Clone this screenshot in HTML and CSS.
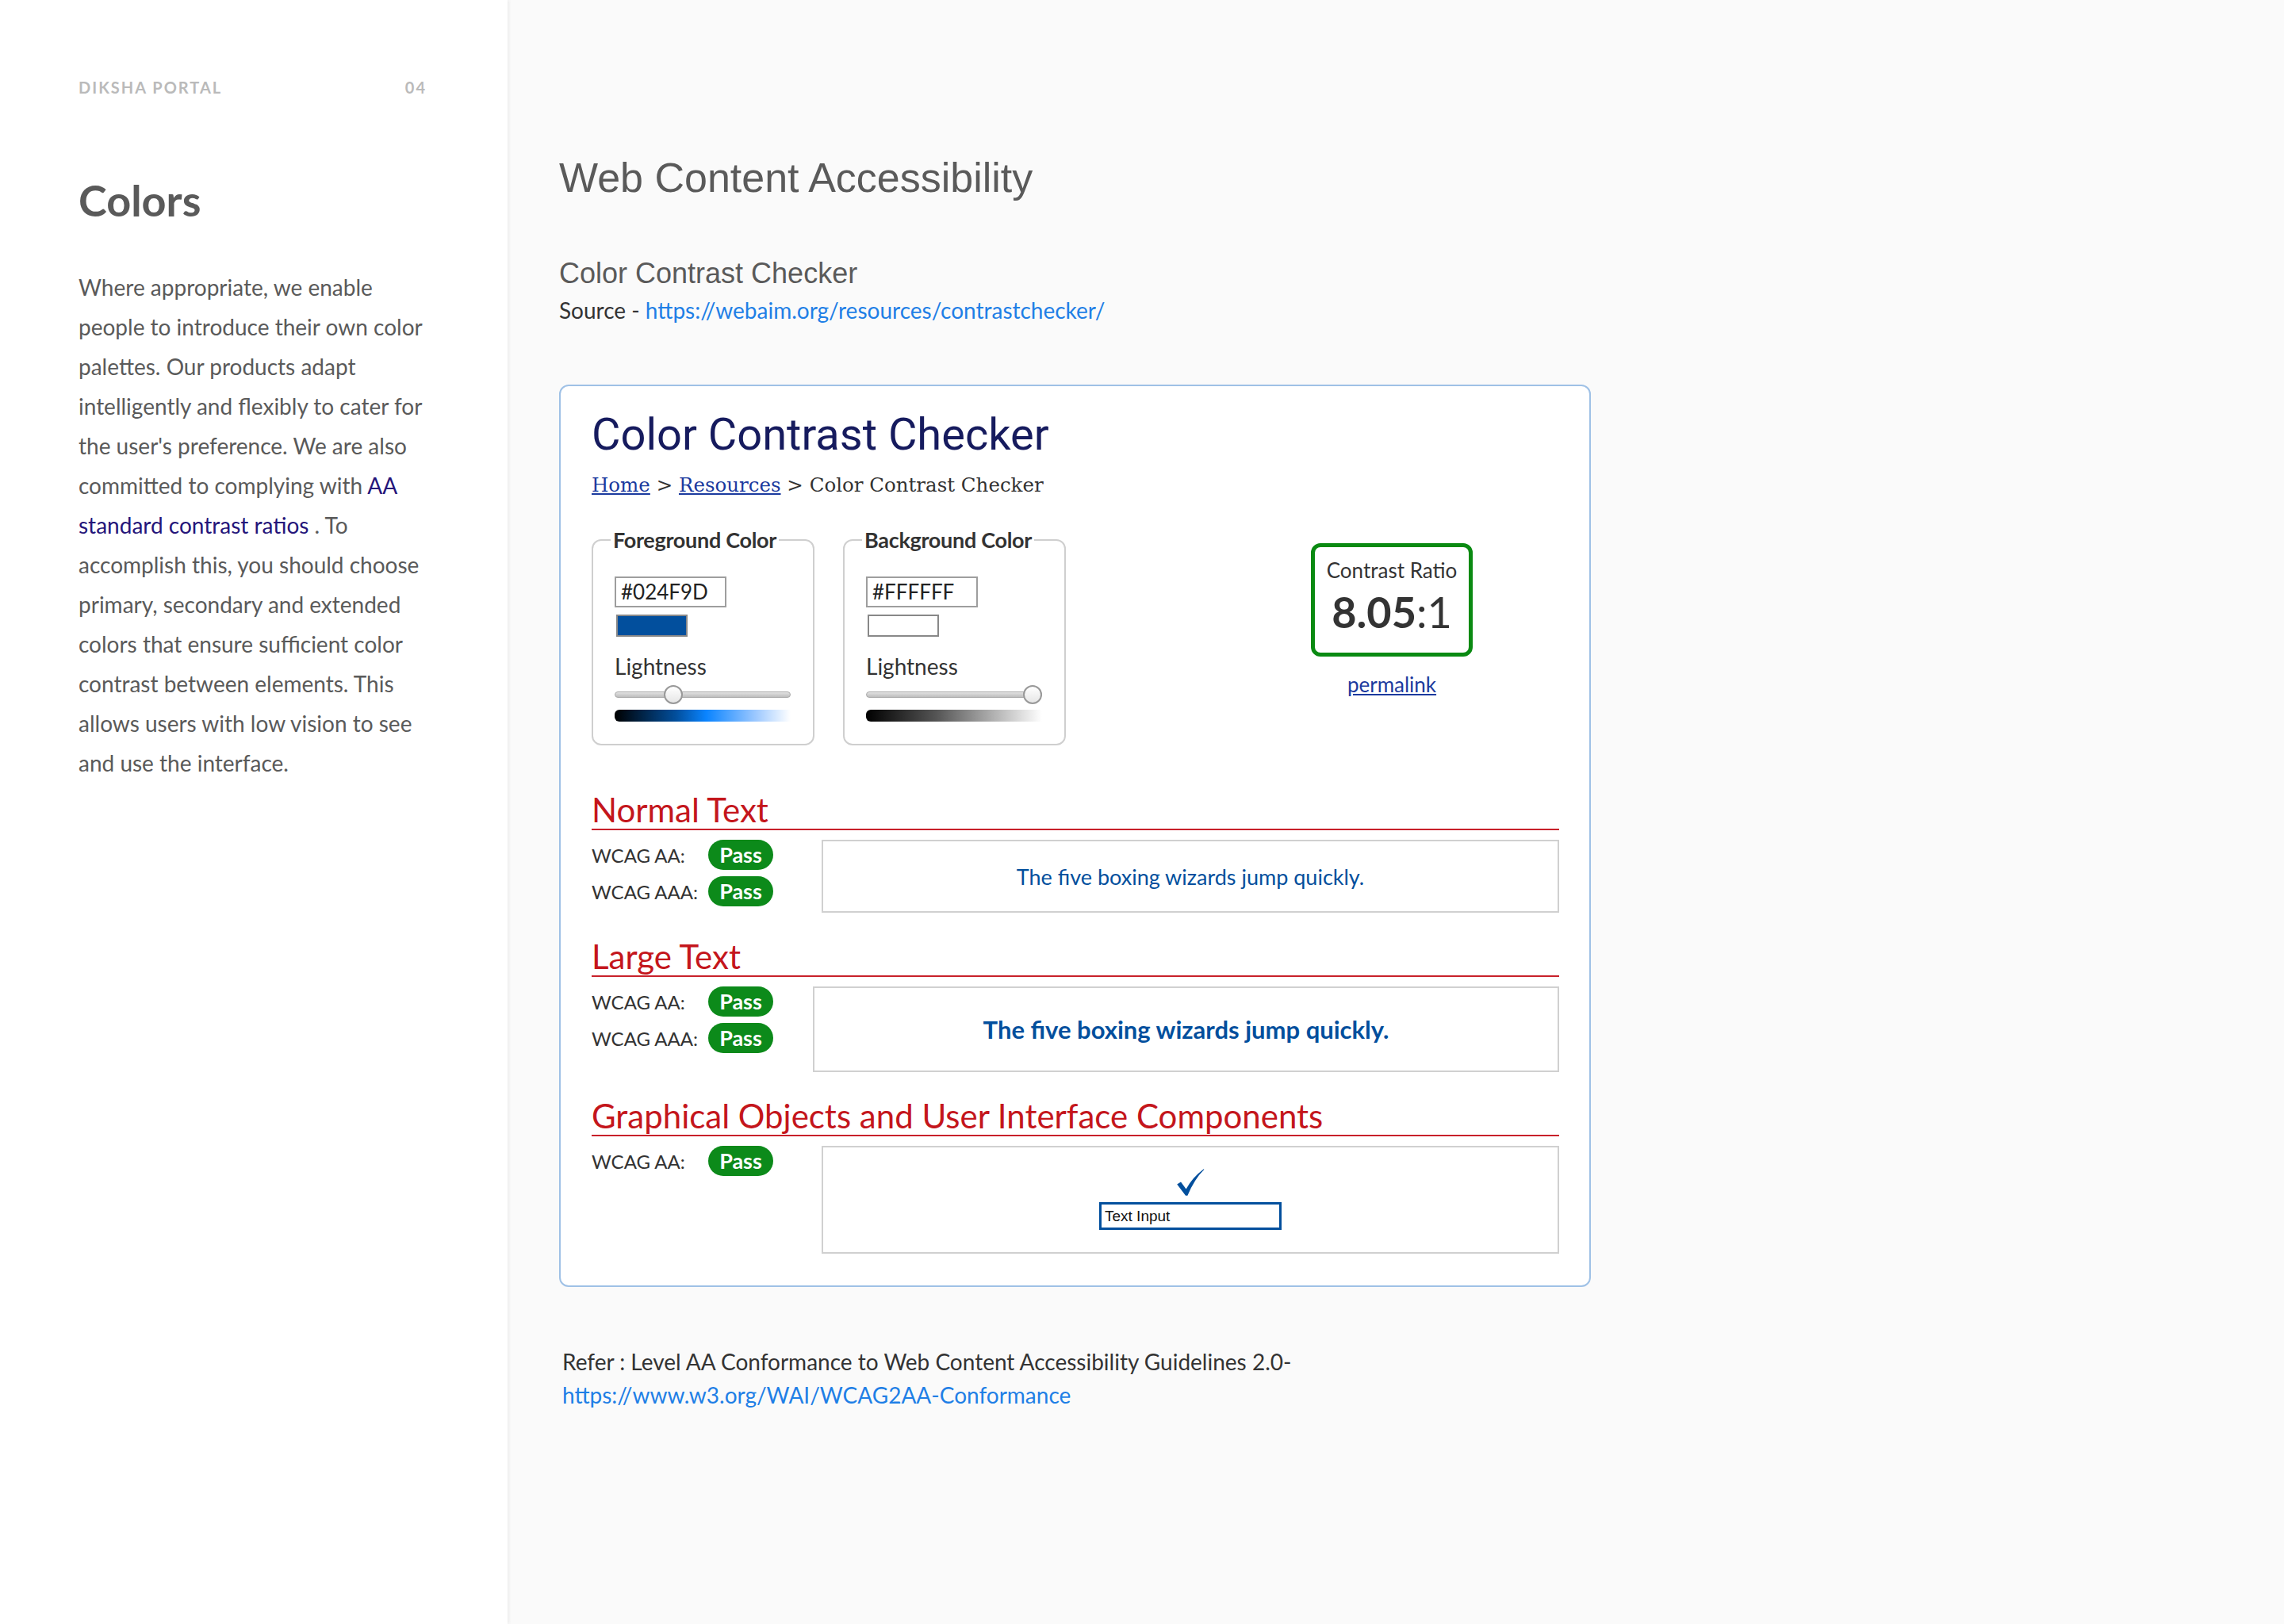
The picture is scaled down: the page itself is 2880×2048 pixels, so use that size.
FILE: index.html
```html
<!DOCTYPE html>
<html lang="en">
<head>
<meta charset="utf-8">
<title>Colors - Web Content Accessibility</title>
<link rel="stylesheet" href="styles.css">
</head>
<body>
<div class="page">
  <aside class="sidebar">
    <div class="side-head">
      <span class="brand">DIKSHA PORTAL</span>
      <span class="pageno">04</span>
    </div>
    <h1 class="side-title">Colors</h1>
    <p class="side-text">Where appropriate, we enable people to introduce their own color palettes. Our products adapt intelligently and flexibly to cater for the user's preference. We are also committed to complying with <a class="side-link" href="#">AA</a> <a class="side-link" href="#">standard contrast ratios</a> . To accomplish this, you should choose primary, secondary and extended colors that ensure sufficient color contrast between elements. This allows users with low vision to see and use the interface.</p>
  </aside>
  <main class="main">
    <h2 class="main-title">Web Content Accessibility</h2>
    <h3 class="sub-title">Color Contrast Checker</h3>
    <p class="source">Source - <a href="#" class="blue-link">https://webaim.org/resources/contrastchecker/</a></p>

    <section class="card">
      <h1 class="cc-title">Color Contrast Checker</h1>
      <p class="crumbs"><a href="#">Home</a> &gt; <a href="#">Resources</a> &gt; Color Contrast Checker</p>

      <div class="pickers">
        <fieldset class="picker">
          <legend>Foreground Color</legend>
          <div class="hex">#024F9D</div>
          <div class="swatch swatch-fg"></div>
          <div class="light-label">Lightness</div>
          <div class="slider"><span class="track"></span><span class="thumb thumb-fg"></span></div>
          <div class="grad grad-fg"></div>
        </fieldset>
        <fieldset class="picker">
          <legend>Background Color</legend>
          <div class="hex">#FFFFFF</div>
          <div class="swatch swatch-bg"></div>
          <div class="light-label">Lightness</div>
          <div class="slider"><span class="track"></span><span class="thumb thumb-bg"></span></div>
          <div class="grad grad-bg"></div>
        </fieldset>
        <div class="ratio-col">
          <div class="ratio-box">
            <div class="ratio-label">Contrast Ratio</div>
            <div class="ratio-value"><b>8.05</b>:1</div>
          </div>
          <a href="#" class="permalink">permalink</a>
        </div>
      </div>

      <h2 class="sec-title sec-first">Normal Text</h2>
      <div class="result">
        <div class="grades">
          <div class="grade"><span class="glabel">WCAG AA:</span><span class="pass">Pass</span></div>
          <div class="grade"><span class="glabel">WCAG AAA:</span><span class="pass">Pass</span></div>
        </div>
        <div class="sample sample-normal">The five boxing wizards jump quickly.</div>
      </div>

      <h2 class="sec-title">Large Text</h2>
      <div class="result">
        <div class="grades grades-large">
          <div class="grade"><span class="glabel">WCAG AA:</span><span class="pass">Pass</span></div>
          <div class="grade"><span class="glabel">WCAG AAA:</span><span class="pass">Pass</span></div>
        </div>
        <div class="sample sample-large">The five boxing wizards jump quickly.</div>
      </div>

      <h2 class="sec-title">Graphical Objects and User Interface Components</h2>
      <div class="result">
        <div class="grades">
          <div class="grade"><span class="glabel">WCAG AA:</span><span class="pass">Pass</span></div>
        </div>
        <div class="sample sample-ui">
          <svg class="check" width="36" height="36" viewBox="0 0 30 30" aria-hidden="true"><path d="M1 17 L5 14.5 L10.5 22 Q17 10 29 1 L29.5 1.5 Q19 12 12 29 L10 29 Z" fill="#024F9D"/></svg>
          <div class="text-input">Text Input</div>
        </div>
      </div>
    </section>

    <p class="refer">Refer : Level AA Conformance to Web Content Accessibility Guidelines 2.0-<br><a href="#" class="blue-link">https://www.w3.org/WAI/WCAG2AA-Conformance</a></p>
  </main>
</div>
</body>
</html>
```

FILE: styles.css
```css
html, body {
  margin: 0;
  padding: 0;
}
body {
  background: #fafafa;
  font-family: "Lato", "Liberation Sans", sans-serif;
  color: #333;
}
.page {
  display: flex;
  min-height: 2048px;
}
.sidebar {
  width: 640px;
  flex: none;
  background: #ffffff;
  box-sizing: border-box;
  padding: 98px 102px 0 99px;
  box-shadow: 2px 0 4px rgba(0, 0, 0, 0.06);
  position: relative;
  z-index: 1;
}
.side-head {
  display: flex;
  justify-content: space-between;
  font-size: 20px;
  line-height: 24px;
  font-weight: 700;
  color: #bababa;
  letter-spacing: 2px;
}
.side-title {
  margin: 100px 0 0;
  font-size: 54px;
  line-height: 62px;
  font-weight: 700;
  color: #5a5a5a;
}
.side-text {
  margin: 53px -10px 0 0;
  font-size: 28px;
  line-height: 50px;
  color: #5a5a5a;
}
.side-link {
  color: #25157a;
  text-decoration: none;
}
.main {
  flex: 1;
  padding: 194px 0 0 65px;
}
.main-title {
  margin: 0;
  font-family: "Liberation Sans", Arial, sans-serif;
  font-weight: 400;
  font-size: 52px;
  line-height: 60px;
  color: #5a5a5a;
}
.sub-title {
  margin: 69px 0 0;
  font-family: "Liberation Sans", Arial, sans-serif;
  font-weight: 400;
  font-size: 36px;
  line-height: 44px;
  color: #5a5a5a;
}
.source {
  margin: 6px 0 0;
  font-size: 28px;
  line-height: 36px;
  color: #333;
}
.blue-link {
  color: #1f7fe6;
  text-decoration: none;
}
.card {
  margin-top: 76px;
  width: 1301px;
  box-sizing: border-box;
  background: #fff;
  border: 2px solid #9fc1e6;
  border-radius: 12px;
  padding: 28px 38px 40px 39px;
}
.cc-title {
  margin: 0;
  font-family: "Roboto", "Liberation Sans", sans-serif;
  font-weight: 400;
  font-size: 56px;
  line-height: 66px;
  color: #161b5e;
}
.crumbs {
  margin: 15px 0 0;
  font-family: "DejaVu Serif", "Liberation Serif", serif;
  font-size: 24.5px;
  line-height: 32px;
  color: #333;
}
.crumbs a {
  color: #1b3a9e;
}
.pickers {
  display: flex;
  align-items: flex-start;
  margin-top: 38px;
}
.picker {
  margin: 0 36px 0 0;
  width: 281px;
  box-sizing: border-box;
  border: 2px solid #cfcfcf;
  border-radius: 12px;
  padding: 31px 28px 28px 27px;
  min-inline-size: 0;
}
.picker legend {
  padding: 0 3px;
  margin-left: -5px;
  font-weight: 700;
  font-size: 27px;
  line-height: 30px;
  color: #333;
  letter-spacing: -0.3px;
}
.hex {
  width: 141px;
  height: 39px;
  box-sizing: border-box;
  border: 2px solid #9e9e9e;
  font-size: 26px;
  line-height: 35px;
  padding-left: 6px;
  color: #222;
}
.swatch {
  margin: 9px 0 0 2px;
  width: 90px;
  height: 28px;
  box-sizing: border-box;
  border: 2px solid #888;
}
.swatch-fg {
  background: #024F9D;
}
.swatch-bg {
  background: #fff;
}
.light-label {
  margin-top: 21px;
  font-size: 28px;
  line-height: 32px;
  color: #333;
}
.slider {
  position: relative;
  margin-top: 8px;
  height: 24px;
}
.track {
  position: absolute;
  left: 0;
  right: 0;
  top: 8px;
  height: 8px;
  border-radius: 4px;
  background: linear-gradient(#e2e2e2, #bdbdbd);
  border: 1px solid #aaa;
  box-sizing: border-box;
}
.thumb {
  position: absolute;
  top: 0;
  width: 24px;
  height: 24px;
  box-sizing: border-box;
  border-radius: 50%;
  border: 2px solid #999;
  background: linear-gradient(#ffffff, #e6e6e6);
}
.thumb-fg {
  left: 62px;
}
.thumb-bg {
  left: 198px;
}
.grad {
  margin-top: 7px;
  height: 15px;
  border-radius: 6px 0 0 6px;
}
.grad-fg {
  background: linear-gradient(to right, #000 0%, #024F9D 35%, #0a84ff 52%, #9cc8ff 80%, #fff 100%);
}
.grad-bg {
  background: linear-gradient(to right, #000 0%, #555 40%, #aaa 70%, #fff 100%);
}
.ratio-col {
  margin: 19px 0 0 273px;
  display: flex;
  flex-direction: column;
  align-items: center;
}
.ratio-box {
  width: 204px;
  height: 143px;
  box-sizing: border-box;
  border: 5px solid #0a8a12;
  border-radius: 12px;
  text-align: center;
  padding-top: 14px;
}
.ratio-label {
  font-size: 26px;
  line-height: 30px;
  color: #333;
}
.ratio-value {
  margin-top: 6px;
  font-size: 54px;
  line-height: 64px;
  color: #333;
}
.ratio-value b {
  font-weight: 700;
}
.permalink {
  margin-top: 20px;
  font-size: 26px;
  line-height: 30px;
  color: #1b3a9e;
}
.sec-title {
  margin: 31px 0 0;
  font-weight: 400;
  font-size: 42px;
  line-height: 48px;
  color: #c4161c;
  border-bottom: 2px solid #c8202a;
}
.sec-first {
  margin-top: 57px;
}
.result {
  display: flex;
  align-items: flex-start;
  margin-top: 12px;
}
.grades {
  width: 290px;
  flex: none;
  display: flex;
  flex-direction: column;
  gap: 8px;
}
.grades-large {
  width: 279px;
}
.grade {
  display: flex;
  align-items: center;
  height: 38px;
}
.glabel {
  width: 147px;
  font-size: 24px;
  color: #333;
}
.pass {
  width: 82px;
  height: 38px;
  border-radius: 19px;
  background: #0c8a1a;
  color: #fff;
  font-weight: 700;
  font-size: 27px;
  line-height: 38px;
  text-align: center;
}
.sample {
  flex: 1;
  border: 2px solid #d0d0d0;
  display: flex;
  align-items: center;
  justify-content: center;
  color: #024F9D;
  box-sizing: border-box;
}
.sample-normal {
  height: 92px;
  font-size: 27px;
}
.sample-large {
  height: 108px;
  font-size: 31px;
  font-weight: 700;
}
.sample-ui {
  height: 136px;
  flex-direction: column;
  justify-content: flex-start;
  padding-top: 26px;
}
.check {
  display: block;
}
.text-input {
  margin-top: 7px;
  width: 230px;
  height: 35px;
  box-sizing: border-box;
  border: 3px solid #024F9D;
  font-family: "Liberation Sans", Arial, sans-serif;
  font-size: 19px;
  line-height: 29px;
  padding-left: 4px;
  color: #111;
}
.refer {
  margin: 73px 0 0 4px;
  font-size: 28px;
  line-height: 42px;
  color: #333;
}
```
